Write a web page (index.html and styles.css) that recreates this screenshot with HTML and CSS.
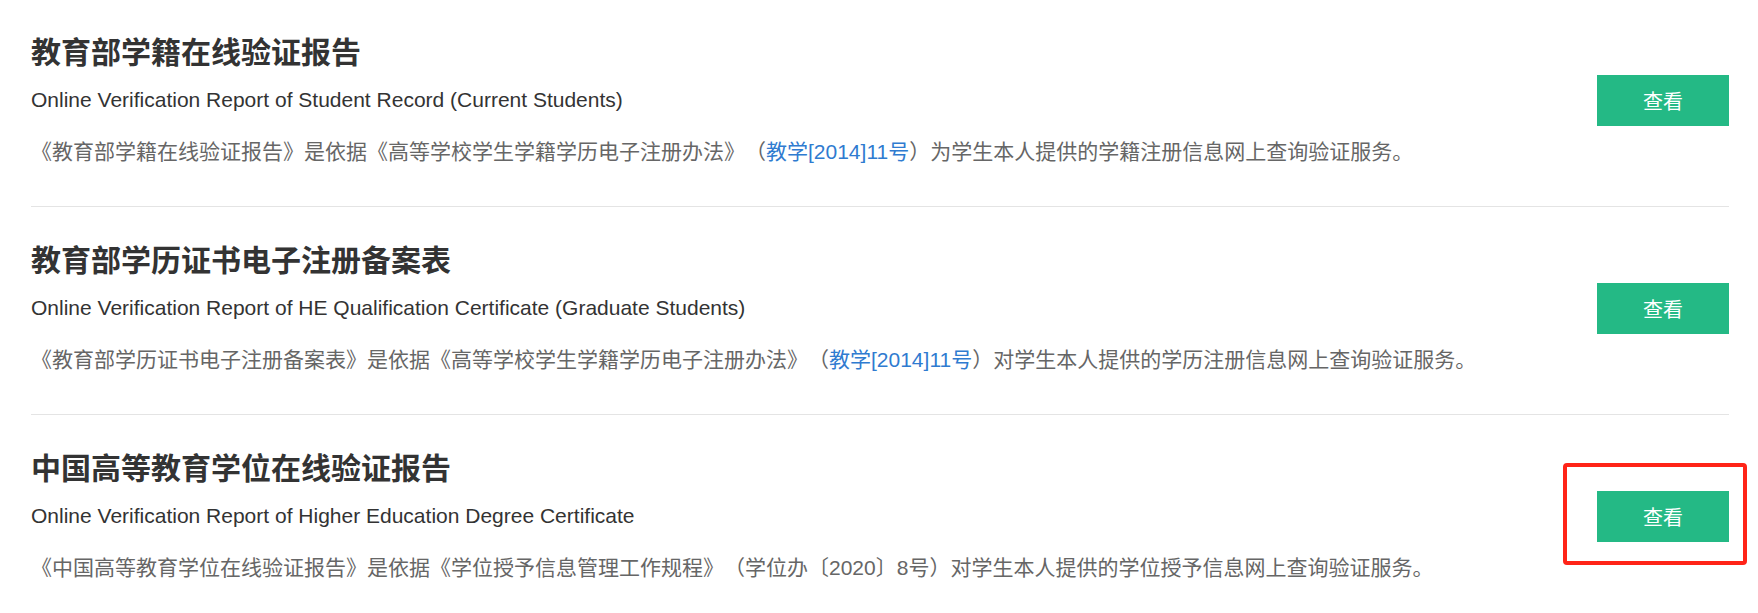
FILE: index.html
```html
<!DOCTYPE html>
<html lang="zh-CN">
<head>
<meta charset="utf-8">
<title>报告验证</title>
<link rel="stylesheet" href="styles.css">
</head>
<body>
<div class="list">
  <section class="item">
    <div class="info">
      <h2 class="title">教育部学籍在线验证报告</h2>
      <p class="en">Online Verification Report of Student Record (Current Students)</p>
      <p class="desc">《教育部学籍在线验证报告》是依据《高等学校学生学籍学历电子注册办法》（<a class="link" href="#">教学[2014]11号</a>）为学生本人提供的学籍注册信息网上查询验证服务。</p>
    </div>
    <div class="action"><a class="btn" href="#">查看</a></div>
  </section>
  <section class="item">
    <div class="info">
      <h2 class="title">教育部学历证书电子注册备案表</h2>
      <p class="en">Online Verification Report of HE Qualification Certificate (Graduate Students)</p>
      <p class="desc">《教育部学历证书电子注册备案表》是依据《高等学校学生学籍学历电子注册办法》（<a class="link" href="#">教学[2014]11号</a>）对学生本人提供的学历注册信息网上查询验证服务。</p>
    </div>
    <div class="action"><a class="btn" href="#">查看</a></div>
  </section>
  <section class="item last">
    <div class="info">
      <h2 class="title">中国高等教育学位在线验证报告</h2>
      <p class="en">Online Verification Report of Higher Education Degree Certificate</p>
      <p class="desc">《中国高等教育学位在线验证报告》是依据《学位授予信息管理工作规程》（学位办〔2020〕8号）对学生本人提供的学位授予信息网上查询验证服务。</p>
    </div>
    <div class="action highlighted"><a class="btn" href="#">查看</a><span class="mark"></span></div>
  </section>
</div>
</body>
</html>
```
FILE: styles.css
```css
html, body {
  margin: 0;
  padding: 0;
  background: #ffffff;
}
body {
  font-family: "Liberation Sans", Arial, "Noto Sans CJK SC", sans-serif;
  color: #333333;
  overflow: hidden;
  text-spacing-trim: space-all;
}
.list {
  width: 1698px;
  margin-left: 31px;
  margin-top: -1px;
}
.item {
  display: flex;
  align-items: flex-start;
  justify-content: space-between;
  padding: 34px 0 40px;
  border-bottom: 1px solid #e4e4e4;
}
.item.last {
  border-bottom: none;
}
.info {
  display: flex;
  flex-direction: column;
}
.title {
  margin: 0;
  font-size: 30px;
  line-height: 40px;
  font-weight: bold;
  color: #333333;
  font-family: "Liberation Sans", "Noto Sans CJK SC", sans-serif;
}
.en {
  margin: 13px 0 0;
  font-size: 21px;
  line-height: 28px;
  color: #333333;
}
.desc {
  margin: 24px 0 0;
  font-size: 21px;
  line-height: 28px;
  color: #666666;
  text-spacing-trim: space-all;
}
.link {
  color: #2f7bd0;
  text-decoration: none;
}
.action {
  position: relative;
  padding-top: 42px;
}
.btn {
  display: flex;
  align-items: center;
  justify-content: center;
  width: 132px;
  height: 51px;
  background: #24b985;
  color: #ffffff;
  font-size: 20px;
  text-decoration: none;
  font-family: "Noto Sans CJK SC", sans-serif;
}
.mark {
  position: absolute;
  left: -34px;
  top: 14px;
  width: 176px;
  height: 94px;
  border: 4px solid #ff2418;
  border-radius: 4px;
}
```
